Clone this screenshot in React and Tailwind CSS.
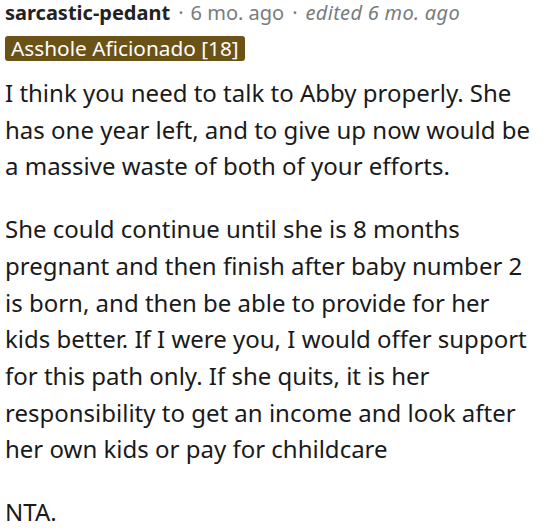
export default function App() {
    return (
        <div className="w-[549px] h-[528px] overflow-hidden bg-white pl-[5px] pr-[10px] text-[#1a1a1b]">
            <div className="flex items-center text-[20px] leading-[26px] font-['Noto_Sans',sans-serif] text-[#787c7e]">
                <span className="font-bold text-[#222]">sarcastic-pedant</span>
                <span className="ml-[8px]">·</span>
                <span className="ml-[7px]">6 mo. ago</span>
                <span className="ml-[8px]">·</span>
                <span className="ml-[8px] italic tracking-[0.3px]">edited 6 mo. ago</span>
            </div>
            <div className="mt-[10px] flex">
                <span className="rounded-[3px] bg-[#6b5216] px-[6px] text-[20.8px] leading-[25px] text-white font-['Noto_Sans',sans-serif]">
                    Asshole Aficionado [18]
                </span>
            </div>
            <div className="mt-[14px] text-[24px] leading-[36.7px] font-['Noto_Sans',sans-serif]">
                <p>
                    I think you need to talk to Abby properly. She has one year left, and to give up now would be a massive waste of both of your efforts.
                </p>
                <p className="mt-[26px]">
                    She could continue until she is 8 months pregnant and then finish after baby number 2 is born, and then be able to provide for her kids better. If I were you, I would offer support for this path only. If she quits, it is her responsibility to get an income and look after her own kids or pay for chhildcare
                </p>
                <p className="mt-[26px]">NTA.</p>
            </div>
        </div>
    );
}
